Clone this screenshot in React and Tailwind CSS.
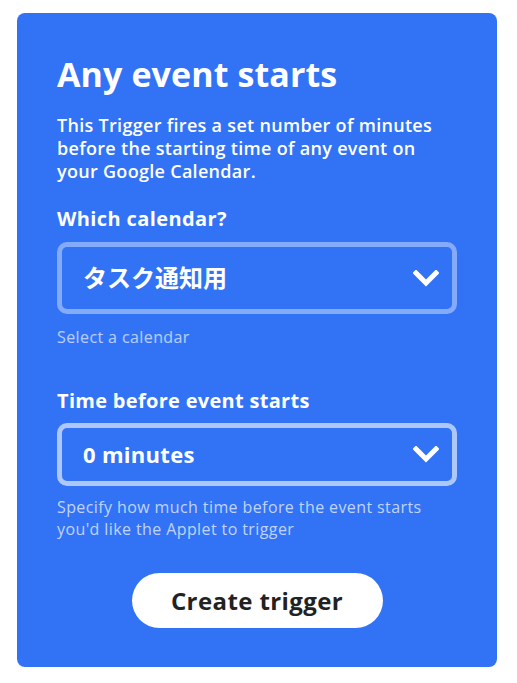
import React from 'react';

function Chevron() {
  return (
    <svg width="26" height="17" viewBox="0 0 26 17" fill="none">
      <path d="M3 3l10 10L23 3" stroke="white" strokeWidth="5" strokeLinecap="square" />
    </svg>
  );
}

function Select({ children, border }) {
  return (
    <div className={`flex items-center justify-between rounded-[10px] border-[5px] pl-[21px] pr-[13px] ${border}`}>
      {children}
      <Chevron />
    </div>
  );
}

export default function App() {
  return (
    <div className="bg-white min-h-[683px] pt-[13px] pl-[17px]" style={{ fontFamily: '"Open Sans", "Noto Sans CJK JP", sans-serif' }}>
      <div className="w-[480px] h-[654px] rounded-[8px] bg-[#3273f6] px-[40px] pt-[40px] text-white">
        <h1 className="text-[34px] font-bold leading-[42px] tracking-[0.1px]">Any event starts</h1>
        <p className="mt-[19px] text-[18px] leading-[23px] font-semibold tracking-[0.3px]">
          This Trigger fires a set number of minutes
          <br />
          before the starting time of any event on
          <br />
          your Google Calendar.
        </p>

        <div className="mt-[22px] text-[20px] font-bold leading-[28px] tracking-[0.4px]">Which calendar?</div>
        <div className="mt-[9px] h-[72px] flex flex-col">
          <Select border="h-full border-white/40">
            <span className="text-[24px] font-bold text-white">タスク通知用</span>
          </Select>
        </div>
        <div className="mt-[12px] text-[16px] leading-[22px] text-white/65 tracking-[0.4px]">Select a calendar</div>

        <div className="mt-[39px] text-[20px] font-bold leading-[28px] tracking-[0.3px]">Time before event starts</div>
        <div className="mt-[8px] h-[63px] flex flex-col">
          <Select border="h-full border-white/60">
            <span className="text-[22px] font-bold text-white tracking-[0.3px]">0 minutes</span>
          </Select>
        </div>
        <p className="mt-[10px] text-[16px] leading-[22px] text-white/70 tracking-[0.4px]">
          Specify how much time before the event starts
          <br />
          you'd like the Applet to trigger
        </p>

        <div className="mt-[33px] flex justify-center">
          <button className="h-[55px] w-[251px] rounded-full bg-white text-[24px] font-bold text-[#222222] tracking-[0.4px]">
            Create trigger
          </button>
        </div>
      </div>
    </div>
  );
}
